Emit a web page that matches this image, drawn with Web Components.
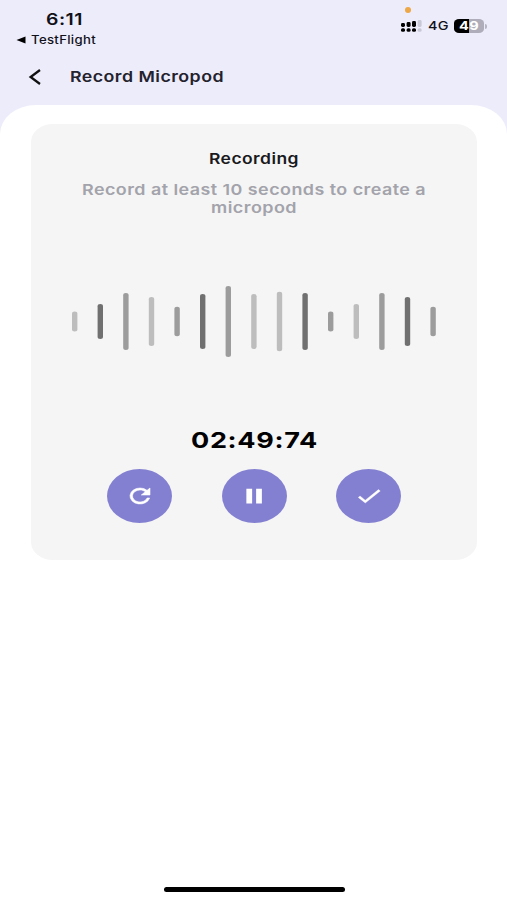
<!DOCTYPE html>
<html lang="en">
<head>
<meta charset="utf-8">
<title>Record Micropod</title>
<style>
  body {
    margin: 0;
    background: #edecfb;
    font-family: Inter, "Liberation Sans", sans-serif;
  }
</style>
</head>
<body>
<record-screen>
  <status-bar slot="status"></status-bar>
  <page-header slot="header">
    <wide-text width="154" size="15.2" weight="600" line="20">Record Micropod</wide-text>
  </page-header>
  <record-card>
    <wide-text slot="title" width="90" size="15" weight="600" line="18">Recording</wide-text>
    <wide-text slot="hint" width="344" size="15" weight="600" line="18">Record at least 10 seconds to create a</wide-text>
    <wide-text slot="hint" width="86" size="15" weight="600" line="18">micropod</wide-text>
    <wave-form slot="wave"></wave-form>
    <wide-text slot="time" width="127" size="22" weight="650" line="28">02:49:74</wide-text>
    <round-button slot="controls" label="Restart">
      <svg width="30" height="24" viewBox="0 0 24 24" preserveAspectRatio="none" fill="#fff" stroke="#fff" stroke-width=".5"><path d="M17.65 6.35A7.96 7.96 0 0 0 12 4a8 8 0 1 0 7.73 10h-2.08A6 6 0 1 1 12 6c1.66 0 3.14.69 4.22 1.78L13 11h7V4z"/></svg>
    </round-button>
    <round-button slot="controls" label="Pause">
      <svg width="30" height="24" viewBox="0 0 24 24" preserveAspectRatio="none" fill="#fff"><path d="M5.9 4.8h4.6v14.6H5.9zM13.7 4.8h4.6v14.6h-4.6z"/></svg>
    </round-button>
    <round-button slot="controls" label="Done">
      <svg width="30" height="24" viewBox="0 0 24 24" preserveAspectRatio="none" fill="#fff" stroke="#fff" stroke-width=".3"><path d="M9 16.17 4.83 12l-1.42 1.41L9 19 21 7l-1.41-1.41z"/></svg>
    </round-button>
  </record-card>
</record-screen>

<script>
function makeTemplate(html) {
  const template = document.createElement("template");
  template.innerHTML = html;
  return template;
}

class BaseElement extends HTMLElement {
  constructor() {
    super();
    const shadowRoot = this.attachShadow({mode: "open"});
    shadowRoot.append(this.constructor.template.content.cloneNode(true));
  }
}

// one line of text, stretched sideways to fill the width attribute
class WideText extends BaseElement {
  static template = makeTemplate(`
    <style>
      :host { display: block; flex: none; letter-spacing: .025em; }
      span { display: inline-block; white-space: nowrap; transform-origin: 0 50%; }
    </style>
    <span><slot></slot></span>`);

  connectedCallback() {
    const width = Number(this.getAttribute("width"));
    const span = this.shadowRoot.querySelector("span");
    this.style.width = width + "px";
    this.style.height = this.getAttribute("line") + "px";
    this.style.lineHeight = this.getAttribute("line") + "px";
    this.style.fontSize = this.getAttribute("size") + "px";
    this.style.fontWeight = this.getAttribute("weight");
    span.style.transform = "scaleX(" + width / span.getBoundingClientRect().width + ")";
  }
}

class RecordScreen extends BaseElement {
  static template = makeTemplate(`
    <style>
      :host { display: flex; flex-direction: column; width: 507px; height: 900px; overflow: hidden; background: #edecfb; }
      main {
        flex: 1;
        display: flex;
        flex-direction: column;
        justify-content: space-between;
        align-items: center;
        box-sizing: border-box;
        padding: 18.5px 0 8px 1px;
        background: #fff;
        border-radius: 36px 36px 0 0 / 29px 29px 0 0;
      }
      .home { width: 181px; height: 5px; border-radius: 3px; background: #000; }
    </style>
    <slot name="status"></slot>
    <slot name="header"></slot>
    <main>
      <slot></slot>
      <div class="home"></div>
    </main>`);
}

class StatusBar extends BaseElement {
  static template = makeTemplate(`
    <style>
      :host { display: flex; justify-content: space-between; height: 48px; color: #11111a; }
      .left { padding-left: 16px; }
      .clock { padding: 9px 0 0 30px; }
      .back { display: flex; align-items: center; gap: 4.5px; margin-top: 1.5px; }
      .right { display: flex; flex-direction: column; padding: 7px 20px 0 0; }
      .mic { width: 6px; height: 6px; margin-left: 4px; border-radius: 50%; background: #eda746; }
      .icons { display: flex; align-items: center; height: 16px; margin-top: 5px; }
      .net { margin: 0 5px 0 6px; }
      .battery {
        display: flex;
        justify-content: center;
        width: 30px;
        height: 14px;
        border-radius: 5px / 4px;
        background: linear-gradient(90deg, #000 49%, #aeadb9 49%);
        color: #fff;
      }
      .tip { width: 2px; height: 5px; margin-left: 1px; border-radius: 0 2px 2px 0; background: #b5b4c1; }
    </style>
    <div class="left">
      <div class="clock"><wide-text width="37" size="16.2" weight="600" line="20">6:11</wide-text></div>
      <div class="back">
        <svg width="10" height="8" viewBox="0 0 10 8"><path d="M.5 4 9.5.4v7.2z" fill="#000"/></svg>
        <wide-text width="65" size="11.3" weight="500" line="18">TestFlight</wide-text>
      </div>
    </div>
    <div class="right">
      <div class="mic"></div>
      <div class="icons">
        <svg width="21" height="12" viewBox="0 0 21 12">
          <rect x="0" y="3" width="4" height="4" rx="1.4"/>
          <rect x="5.6" y="2" width="4" height="5" rx="1.4"/>
          <rect x="11" y="1" width="4" height="6" rx="1.4"/>
          <rect x="16.6" y="0" width="4" height="7" rx="1.4" fill="#c9c8d6"/>
          <rect x="0" y="8.2" width="4" height="3.6" rx="1.5"/>
          <rect x="5.6" y="8.2" width="4" height="3.6" rx="1.5"/>
          <rect x="11" y="8.2" width="4" height="3.6" rx="1.5"/>
          <rect x="16.6" y="8.2" width="4" height="3.6" rx="1.5" fill="#c9c8d6"/>
        </svg>
        <div class="net"><wide-text width="21" size="12.2" weight="500" line="16">4G</wide-text></div>
        <div class="battery"><wide-text width="20" size="12.2" weight="700" line="14">49</wide-text></div>
        <div class="tip"></div>
      </div>
    </div>`);
}

class PageHeader extends BaseElement {
  static template = makeTemplate(`
    <style>
      :host { display: flex; align-items: center; box-sizing: border-box; height: 57px; padding: 1px 0 0 28px; gap: 27.5px; color: #23222d; }
    </style>
    <svg width="14" height="18" viewBox="0 0 14 18"><path d="M12 2 2.6 9l9.4 7" fill="none" stroke="#111" stroke-width="2.3"/></svg>
    <slot></slot>`);
}

class RecordCard extends BaseElement {
  static template = makeTemplate(`
    <style>
      :host {
        display: flex;
        flex-direction: column;
        align-items: center;
        box-sizing: border-box;
        width: 446px;
        height: 436.5px;
        padding-top: 26.5px;
        border-radius: 22px / 18px;
        background: #f5f5f5;
        color: #1a1a1e;
      }
      .hint { display: flex; flex-direction: column; align-items: center; margin-top: 13px; color: #a3a3ab; }
      .wave { margin-top: 69px; }
      .time { margin-top: 69px; color: #000; }
      .controls { display: flex; gap: 49.5px; margin-top: 14.5px; }
    </style>
    <slot name="title"></slot>
    <div class="hint"><slot name="hint"></slot></div>
    <div class="wave"><slot name="wave"></slot></div>
    <div class="time"><slot name="time"></slot></div>
    <div class="controls"><slot name="controls"></slot></div>`);
}

const LIGHT = "#bdbdbd";
const MID = "#9c9c9c";
const DARK = "#707070";
const BARS = [
  [20, LIGHT], [35, DARK], [57, MID], [49, LIGHT], [29.5, MID],
  [55, DARK], [71, MID], [55, LIGHT], [59.5, LIGHT], [57, DARK],
  [20, MID], [35, LIGHT], [57, MID], [49, DARK], [29.5, MID],
];
const BAR_STEP = 25.6;

class WaveForm extends BaseElement {
  static template = makeTemplate(`
    <style>
      :host { display: block; height: 71px; }
      svg { display: block; }
    </style>
    <svg width="364" height="71" viewBox="0 0 364 71"></svg>`);

  connectedCallback() {
    const svg = this.shadowRoot.querySelector("svg");
    // svg rects keep the fractional positions even
    svg.innerHTML = BARS.map(([height, color], i) =>
      `<rect x="${(i * BAR_STEP).toFixed(1)}" y="${(71 - height) / 2}" width="5.4" height="${height}" rx="2.7" ry="2.2" fill="${color}"/>`
    ).join("");
  }
}

class RoundButton extends BaseElement {
  static template = makeTemplate(`
    <style>
      :host { display: block; }
      button {
        display: flex;
        align-items: center;
        justify-content: center;
        width: 65px;
        height: 54px;
        padding: 0;
        border: 0;
        border-radius: 50%;
        background: #8480d1;
      }
    </style>
    <button><slot></slot></button>`);

  connectedCallback() {
    this.shadowRoot.querySelector("button").setAttribute("aria-label", this.getAttribute("label"));
  }
}

customElements.define("wide-text", WideText);
customElements.define("record-screen", RecordScreen);
customElements.define("status-bar", StatusBar);
customElements.define("page-header", PageHeader);
customElements.define("record-card", RecordCard);
customElements.define("wave-form", WaveForm);
customElements.define("round-button", RoundButton);
</script>
</body>
</html>
